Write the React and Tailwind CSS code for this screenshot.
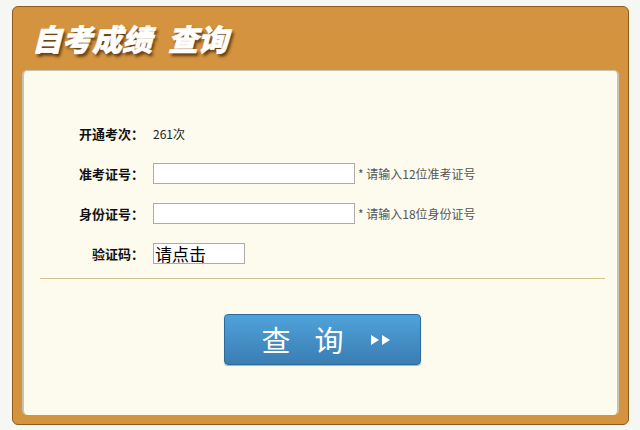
import React from "react";

const font = { fontFamily: '"Noto Sans CJK SC", "Noto Sans", sans-serif' };

const rows = [
  { label: "准考证号：", hint: "* 请输入12位准考证号" },
  { label: "身份证号：", hint: "* 请输入18位身份证号" },
];

const App = () => {
  return (
    <div className="w-[640px] h-[430px] bg-[#f6f6f3] pl-[12px] pt-[6px] font-['Noto_Sans_CJK_SC',sans-serif]">
      <div className="w-[617px] h-[419px] bg-[#d4943f] border border-[#8e5c1c] rounded-[6px] flex flex-col">
        {/*title*/}
        <div className="h-[63px] flex items-center pl-[19px] pb-[2px]">
          <h1 className="text-[30px] font-black italic text-white leading-none [text-shadow:2px_3px_3px_rgba(60,30,0,0.75)] [-webkit-text-stroke:0.6px_white]">
            自考成绩<span className="ml-[16px]">查询</span>
          </h1>
        </div>
        {/*panel*/}
        <div className="flex-1 mx-[9px] mb-[9px] bg-[#fdfaee] rounded-[5px] border-l-2 border-t border-r-2 border-[#c9c3b3] flex flex-col">
          <div className="pt-[52px] flex flex-col gap-[19px]">
            <div className="flex items-center h-[21px]">
              <span className="w-[120px] text-right text-[13px] font-bold text-[#111]">开通考次：</span>
              <span className="ml-[9px] text-[12px] text-[#222]">261次</span>
            </div>
            {rows.map((row) => (
              <div key={row.label} className="flex items-center h-[21px]">
                <span className="w-[120px] text-right text-[13px] font-bold text-[#111]">{row.label}</span>
                <input
                  type="text"
                  className="ml-[9px] w-[202px] h-[21px] bg-white border border-[#ababab] outline-none"
                />
                <span className="ml-[3px] text-[12px] text-[#555]">{row.hint}</span>
              </div>
            ))}
            <div className="flex items-center h-[21px]">
              <span className="w-[120px] text-right text-[13px] font-bold text-[#111]">验证码：</span>
              <div className="ml-[9px] w-[92px] h-[21px] bg-white border border-[#ababab] flex items-center pl-[1px] text-[17px] leading-none text-black">
                请点击
              </div>
            </div>
          </div>
          <div className="mt-[14px] ml-[16px] mr-[12px] h-px bg-[#d3c38e]" />
          <div className="mt-[35px] flex justify-center pl-[4px]">
            <button className="w-[197px] h-[51px] pl-[8px] rounded-[4px] border border-[#2e6a99] bg-gradient-to-b from-[#4fa3da] to-[#3a7db3] flex items-center justify-center text-white shadow-[0_1px_1px_rgba(0,0,0,0.3)]">
              <span className="text-[29px] leading-none" style={font}>查</span>
              <span className="text-[29px] leading-none ml-[24px]" style={font}>询</span>
              <svg className="ml-[27px]" width="21" height="10" viewBox="0 0 21 10">
                <path d="M0 0 L8 5 L0 10 Z" fill="white" />
                <path d="M11 0 L19 5 L11 10 Z" fill="white" />
              </svg>
            </button>
          </div>
        </div>
      </div>
    </div>
  );
};

export default App;
